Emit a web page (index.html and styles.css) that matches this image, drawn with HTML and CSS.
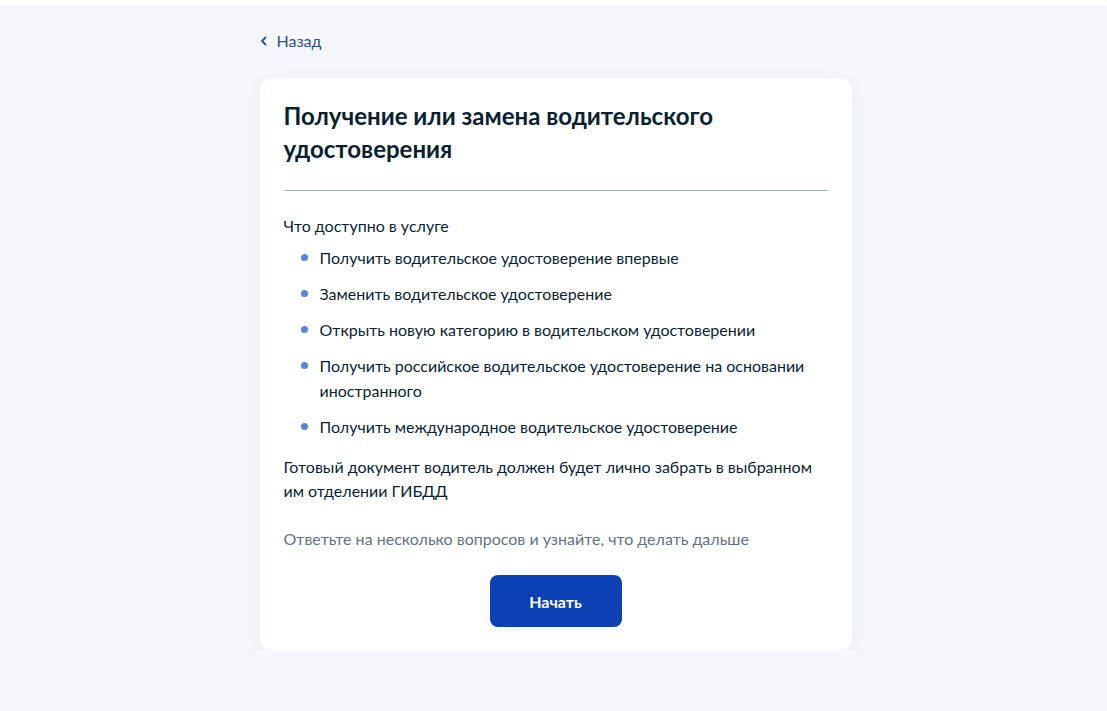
FILE: index.html
```html
<!DOCTYPE html>
<html lang="ru">
<head>
    <meta charset="UTF-8">
    <meta name="viewport" content="width=device-width, initial-scale=1.0">
    <title>Получение или замена водительского удостоверения</title>
    <link rel="stylesheet" href="styles.css">
</head>
<body>
    <div class="top-bar"></div>

    <div class="container">
        <a class="back-link" href="#">
            <svg class="back-icon" width="8" height="10" viewBox="0 0 8 10">
                <path d="M5.5 1.5 L2 5 L5.5 8.5" fill="none" stroke="#2b4f8c" stroke-width="1.8" stroke-linecap="round" stroke-linejoin="round"/>
            </svg>
            <span>Назад</span>
        </a>

        <div class="card">
            <h1 class="card-title">Получение или замена водительского удостоверения</h1>
            <div class="divider"></div>

            <p class="text">Что доступно в услуге</p>
            <ul class="list">
                <li>Получить водительское удостоверение впервые</li>
                <li>Заменить водительское удостоверение</li>
                <li>Открыть новую категорию в водительском удостоверении</li>
                <li>Получить российское водительское удостоверение на основании иностранного</li>
                <li>Получить международное водительское удостоверение</li>
            </ul>

            <p class="text text-note">Готовый документ водитель должен будет лично забрать в выбранном им отделении ГИБДД</p>

            <p class="text text-hint">Ответьте на несколько вопросов и узнайте, что делать дальше</p>

            <div class="actions">
                <button class="btn">Начать</button>
            </div>
        </div>
    </div>
</body>
</html>
```

FILE: styles.css
```css
/* базовые стили */
body {
    margin: 0;
    font-family: Lato, "Noto Sans", sans-serif;
    color: #0b1f33;
    background-color: #f5f7fb;
}

.top-bar {
    height: 6px;
    background-color: #ffffff;
    box-shadow: 0 1px 4px rgba(0, 0, 0, 0.03);
}

.container {
    width: 592px;
    margin-left: calc(50% - 294px);
    padding-top: 24px;
}

/* ссылка назад */
.back-link {
    display: inline-flex;
    align-items: center;
    gap: 9px;
    color: #2b4f8c;
    text-decoration: none;
    font-size: 16px;
    line-height: 20px;
}

.back-icon {
    display: block;
}

/* карточка */
.card {
    margin-top: 27px;
    background-color: #ffffff;
    border-radius: 12px;
    padding: 21px 24px 23px;
    box-shadow: 0 4px 24px rgba(30, 60, 140, 0.06);
}

.card-title {
    margin: 0;
    font-size: 24px;
    line-height: 33px;
    font-weight: 700;
    color: #0b1f33;
    padding-right: 100px;
}

.divider {
    height: 1px;
    background-color: #a8b6c4;
    margin: 25px 0 23px;
}

.text {
    margin: 0;
    font-size: 16px;
    line-height: 24px;
}

/* список */
.list {
    list-style: none;
    margin: 7px 0 0;
    padding: 0;
}

.list li {
    position: relative;
    padding-left: 36px;
    font-size: 16px;
    line-height: 25px;
    margin-bottom: 11px;
}

.list li:last-child {
    margin-bottom: 0;
}

.list li::before {
    content: "";
    position: absolute;
    left: 17px;
    top: 9px;
    width: 7px;
    height: 7px;
    border-radius: 50%;
    background-color: #5b82dc;
}

.text-note {
    margin-top: 16px;
}

.text-hint {
    margin-top: 24px;
    color: #66727f;
}

/* кнопка */
.actions {
    display: flex;
    justify-content: center;
    margin-top: 24px;
}

.btn {
    width: 132px;
    height: 52px;
    border: none;
    border-radius: 8px;
    background-color: #0c41b5;
    color: #ffffff;
    font-family: Lato, "Noto Sans", sans-serif;
    font-size: 16px;
    font-weight: 700;
    cursor: pointer;
}
```
